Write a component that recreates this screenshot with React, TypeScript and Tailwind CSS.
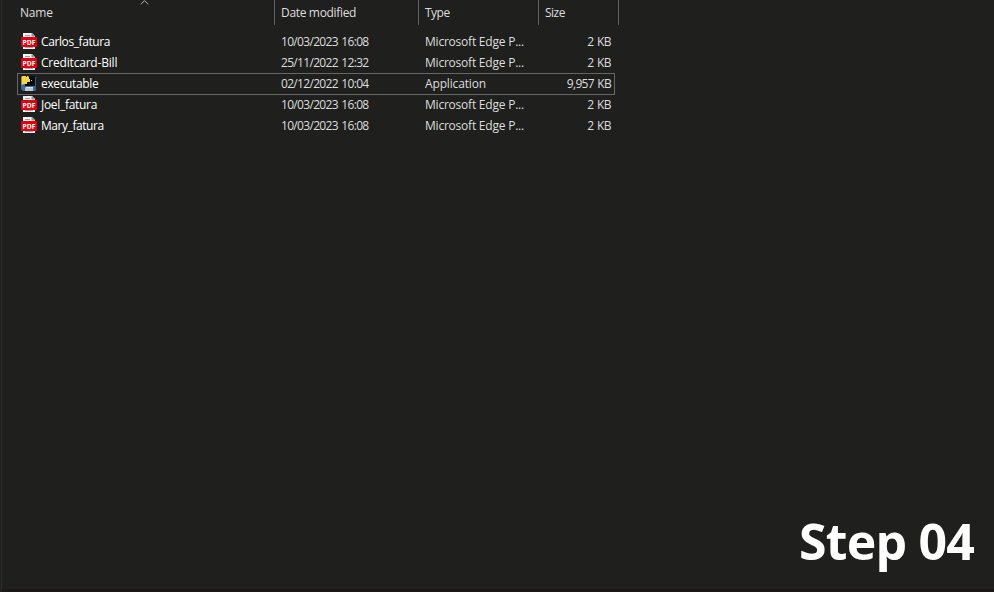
const files = [
  { name: 'Carlos_fatura', date: '10/03/2023 16:08', type: 'Microsoft Edge P...', size: '2 KB', nameSpacing: 'tracking-[-0.4px]' },
  { name: 'Creditcard-Bill', date: '25/11/2022 12:32', type: 'Microsoft Edge P...', size: '2 KB', nameSpacing: 'tracking-[-0.2px]' },
  { name: 'executable', date: '02/12/2022 10:04', type: 'Application', size: '9,957 KB', nameSpacing: 'tracking-[-0.35px]', app: true },
  { name: 'Joel_fatura', date: '10/03/2023 16:08', type: 'Microsoft Edge P...', size: '2 KB', nameSpacing: 'tracking-[-0.3px]' },
  { name: 'Mary_fatura', date: '10/03/2023 16:08', type: 'Microsoft Edge P...', size: '2 KB', nameSpacing: 'tracking-[-0.45px]' },
];

function PdfIcon() {
  return (
    <svg width="16" height="16" viewBox="0 0 16 16" className="mb-[2px] shrink-0">
      <path d="M2 0h9l3 3v13H2z" fill="#f4f4f4" />
      <path d="M10.5 0v3.5H14z" fill="#8c8c8c" />
      <path d="M4 2.5h5M4 14.5h8" stroke="#a3a3a3" />
      <rect y="4" width="16" height="10" rx="0.5" fill="#e3000f" />
      <text x="8" y="11.6" textAnchor="middle" fontSize="7.2" fontWeight="700" fill="#fff" textLength="13" lengthAdjust="spacingAndGlyphs" fontFamily="Open Sans, sans-serif">PDF</text>
    </svg>
  );
}

function AppIcon() {
  return (
    <svg width="16" height="16" viewBox="0 0 16 16" className="mb-[2px] shrink-0">
      <path d="M0 8h15v7l-1 1H2l-2-2z" fill="#386d9e" />
      <path d="M14 2h1v12h-1z" fill="#315d85" />
      <path d="M5 1h9v10H4V6z" fill="#080c10" />
      <path d="M0 2 1.5 1H7l1 1v2h1v3H6v2H3L1 10 0 8z" fill="#f6d44b" />
      <path d="M0 2h1v7H0z" fill="#a78a2e" />
      <path d="M5 1h1v1H5z" fill="#2b291c" />
      <path d="M10 5h1v1h-1z" fill="#e5d49b" />
      <path d="M5 12h7v4H4v-3z" fill="#bfc6cb" />
      <path d="M5 12h7v1H5z" fill="#dfe5e8" />
    </svg>
  );
}

export default function App() {
  return (
    <main className="relative h-[592px] w-[994px] overflow-hidden bg-[#1f1f1d] pl-px font-['Open_Sans','Noto_Sans',sans-serif] text-[12px] text-[#dedede]">
      <div className="flex h-full flex-col border-b-[3px] border-l border-b-[#1c1718] border-l-[#2b2b29]">
        <header className="flex h-[25px] w-[617px] leading-[26px]">
          <div className="w-[273px] border-r border-[#636363] pl-[18px] tracking-[-0.2px]">Name</div>
          <div className="w-[144px] border-r border-[#636363] pl-[6px] tracking-[-0.33px]">Date modified</div>
          <div className="w-[120px] border-r border-[#636363] pl-[6px] tracking-[-0.5px]">Type</div>
          <div className="w-[80px] border-r border-[#636363] pl-[6px] tracking-[-0.5px]">Size</div>
        </header>
        <section className="mt-[6px] ml-[15px] w-[598px]">
          {files.map((file) => (
            <div
              key={file.name}
              className={`-mb-px flex h-[22px] items-center border pl-[3px] ${file.app ? 'border-[#666666]' : 'border-transparent'}`}
            >
              {file.app ? <AppIcon /> : <PdfIcon />}
              <div className={`ml-[4px] w-[240px] text-white ${file.nameSpacing}`}>{file.name}</div>
              <div className="w-[144px] tracking-[-0.68px] [word-spacing:1px]">{file.date}</div>
              <div className={`w-[110px] whitespace-nowrap ${file.app ? 'tracking-[-0.15px]' : 'tracking-[-0.22px]'}`}>{file.type}</div>
              <div className={`w-[76px] text-right ${file.app ? 'tracking-[-0.7px]' : 'tracking-[-0.6px]'} [word-spacing:1px]`}>{file.size}</div>
            </div>
          ))}
        </section>
        <h1 className="mt-auto mr-[20px] mb-[14px] self-end text-[50px] leading-[68px] font-bold tracking-[-0.8px] text-white">Step 04</h1>
      </div>
      <svg className="absolute left-[140px] top-0" width="9" height="5" viewBox="0 0 9 5">
        <path d="M.8 4.3 4.5.6l3.7 3.7" fill="none" stroke="#b4b4b4" />
      </svg>
    </main>
  );
}
